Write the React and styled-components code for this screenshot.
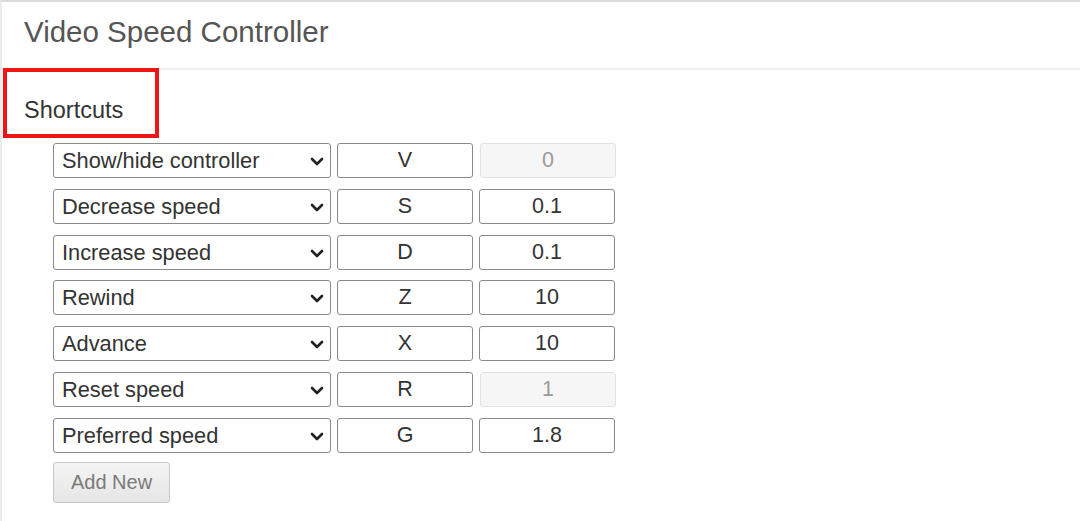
import React from 'react'
import styled, { createGlobalStyle } from 'styled-components'

const GlobalStyle = createGlobalStyle`
  html, body {
    margin: 0;
    padding: 0;
    background: #fff;
    font-family: "Liberation Sans", Arial, sans-serif;
  }
`

const shortcuts = [
  { action: 'Show/hide controller', key: 'V', value: '0', locked: true },
  { action: 'Decrease speed', key: 'S', value: '0.1' },
  { action: 'Increase speed', key: 'D', value: '0.1' },
  { action: 'Rewind', key: 'Z', value: '10' },
  { action: 'Advance', key: 'X', value: '10' },
  { action: 'Reset speed', key: 'R', value: '1', locked: true },
  { action: 'Preferred speed', key: 'G', value: '1.8' },
]

const actions = shortcuts.map((s) => s.action)

export default function App() {
  return (
    <Page>
      <GlobalStyle />
      <Header>
        <Title>Video Speed Controller</Title>
      </Header>
      <Highlight>
        <SectionTitle>Shortcuts</SectionTitle>
      </Highlight>
      <Table>
        {shortcuts.map((s) => (
          <Row key={s.action}>
            <SelectWrap>
              <Select defaultValue={s.action}>
                {actions.map((a) => (
                  <option key={a}>{a}</option>
                ))}
              </Select>
              <Chevron width="14" height="9" viewBox="0 0 14 9">
                <path d="M2 2 L7 7 L12 2" fill="none" stroke="#222" strokeWidth="2.6" strokeLinecap="round" strokeLinejoin="round" />
              </Chevron>
            </SelectWrap>
            <Field defaultValue={s.key} />
            <Field defaultValue={s.value} disabled={s.locked} />
          </Row>
        ))}
      </Table>
      <AddButton>Add New</AddButton>
    </Page>
  )
}

const Page = styled.div`
  min-height: 100vh;
  box-sizing: border-box;
  border-top: 2px solid #dcdcdc;
  border-left: 2px solid #ececec;
  padding-bottom: 20px;
`

const Header = styled.header`
  height: 68px;
  box-sizing: border-box;
  padding: 12px 0 0 22px;
  border-bottom: 2px solid #f0f0f0;
`

const Title = styled.h1`
  margin: 0;
  font-size: 29.5px;
  font-weight: normal;
  color: #555;
  line-height: 36px;
`

const Highlight = styled.div`
  width: 156px;
  height: 70px;
  box-sizing: border-box;
  margin: -2px 0 0 1px;
  border: 4px solid #ee1515;
  padding: 26px 0 0 17px;
`

const SectionTitle = styled.h2`
  margin: 0;
  font-size: 23.5px;
  font-weight: normal;
  color: #333;
  line-height: 24px;
`

const Table = styled.div`
  display: flex;
  flex-direction: column;
  gap: 10.8px;
  margin: 5px 0 0 51px;
`

const Row = styled.div`
  display: flex;
  gap: 6px;
  height: 35px;
`

const SelectWrap = styled.div`
  position: relative;
  width: 278px;
`

const Select = styled.select`
  appearance: none;
  width: 100%;
  height: 35px;
  box-sizing: border-box;
  border: 1px solid #8a8a8a;
  border-radius: 3px;
  background: #fff;
  padding: 0 30px 0 8px;
  font-family: inherit;
  font-size: 21.8px;
  color: #333;
  outline: none;
`

const Chevron = styled.svg`
  position: absolute;
  right: 7px;
  top: 14px;
  pointer-events: none;
`

const Field = styled.input`
  width: 136px;
  height: 35px;
  box-sizing: border-box;
  margin-left: ${(p) => (p.disabled ? '1px' : '0')};
  border: 1px solid ${(p) => (p.disabled ? '#e2e2e2' : '#8a8a8a')};
  border-radius: 3px;
  background: ${(p) => (p.disabled ? '#f6f6f6' : '#fff')};
  color: ${(p) => (p.disabled ? '#9a9a9a' : '#333')};
  text-align: center;
  font-family: inherit;
  font-size: 21.5px;
  padding: 0;
  outline: none;
`

const AddButton = styled.button`
  display: block;
  margin: 9px 0 0 51px;
  width: 117px;
  height: 41px;
  border: 1px solid #c8c8c8;
  border-radius: 3px;
  background: linear-gradient(#f4f4f4, #e6e6e6);
  color: #7a7a7a;
  font-family: inherit;
  font-size: 20px;
  padding: 0;
`
